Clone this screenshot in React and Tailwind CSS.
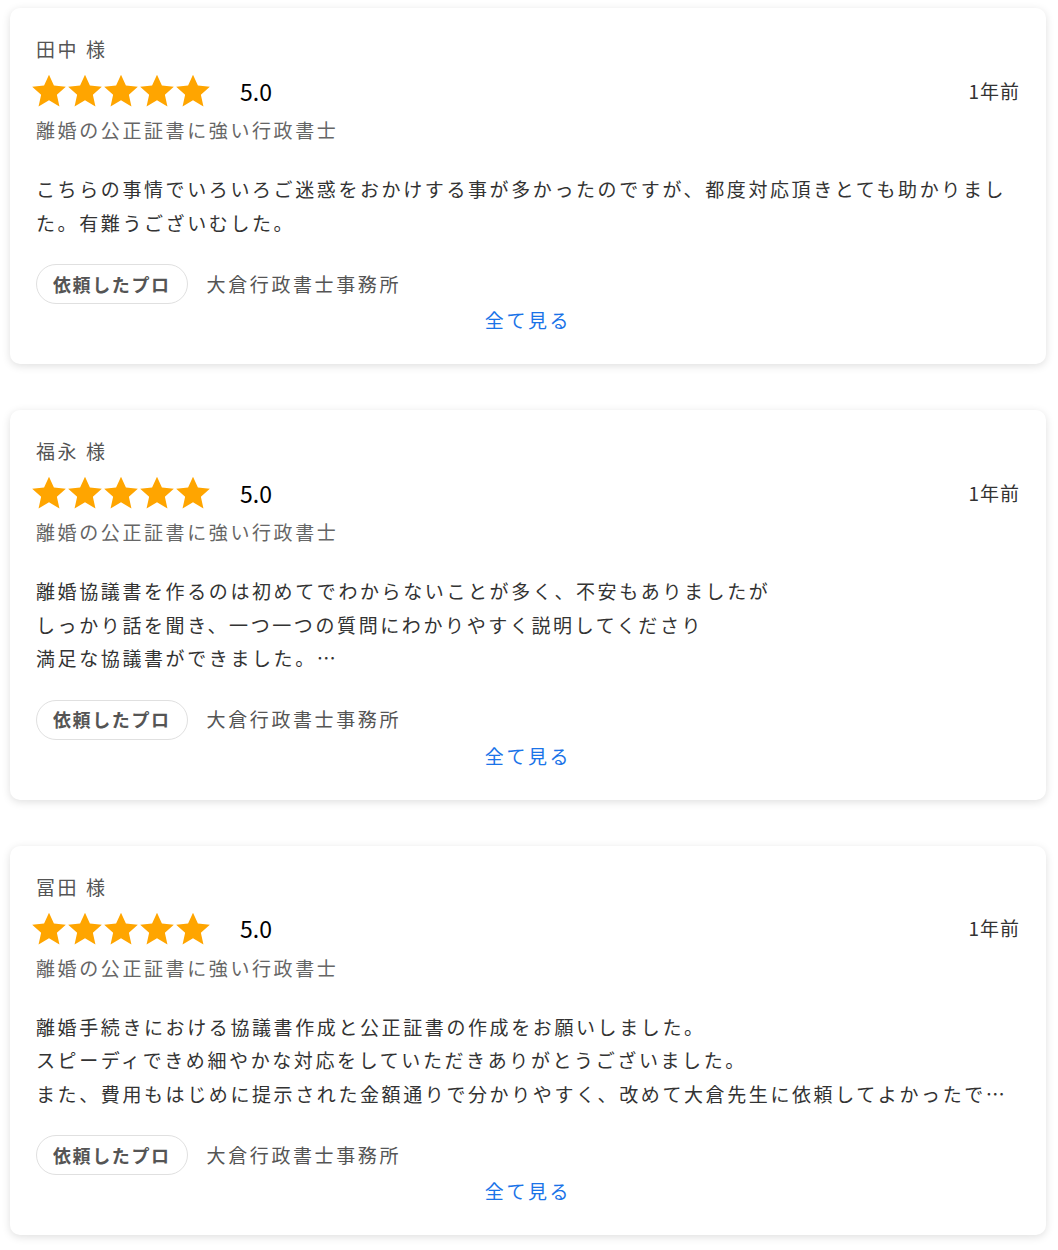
const REVIEWS = [
  {
    id: 1,
    name: '田中 様',
    body: 'こちらの事情でいろいろご迷惑をおかけする事が多かったのですが、都度対応頂きとても助かりました。有難うございむした。',
  },
  {
    id: 2,
    name: '福永 様',
    body: '離婚協議書を作るのは初めてでわからないことが多く、不安もありましたが\nしっかり話を聞き、一つ一つの質問にわかりやすく説明してくださり\n満足な協議書ができました。\n本当にありがとうございました。',
  },
  {
    id: 3,
    name: '冨田 様',
    body: '離婚手続きにおける協議書作成と公正証書の作成をお願いしました。\nスピーディできめ細やかな対応をしていただきありがとうございました。\nまた、費用もはじめに提示された金額通りで分かりやすく、改めて大倉先生に依頼してよかったです。ありがとうございました。',
  },
];

const Star = () => (
  <svg viewBox="0 0 24 24" className="w-[40px] h-[40px] -mx-[2px] shrink-0" fill="#ffa500">
    <path d="M12 2.2l2.95 6.55 7.15.72-5.38 4.78 1.55 7.03L12 17.62l-6.27 3.66 1.55-7.03L1.9 9.47l7.15-.72z" />
  </svg>
);

const ReviewCard = ({ review }) => (
  <div className="bg-white rounded-[10px] shadow-[0_2px_9px_rgba(0,0,0,0.13)] px-[26px] pt-[27px] pb-[30px] tracking-[2.6px]">
    <p className="text-[19px] leading-[28px] text-[#555]">{review.name}</p>

    <div className="flex items-center justify-between mt-[10px] h-[36px]">
      <div className="flex items-center -ml-[5px]">
        {[0, 1, 2, 3, 4].map((i) => <Star key={i} />)}
        <span className="ml-[29px] text-[23px] tracking-normal text-black">5.0</span>
      </div>
      <span className="text-[19px] tracking-[1px] text-[#333]">1年前</span>
    </div>

    <p className="mt-[7px] text-[19px] leading-[28px] text-[#666]">離婚の公正証書に強い行政書士</p>

    <p className="mt-[28px] text-[19px] leading-[33.5px] text-[#333] whitespace-pre-line line-clamp-3">
      {review.body}
    </p>

    <div className="flex items-center mt-[25px]">
      <span className="h-[40px] px-[16px] flex items-center rounded-full border border-[#e0e0e0] text-[18px] font-bold tracking-[1.6px] text-[#555]">
        依頼したプロ
      </span>
      <span className="ml-[19px] text-[19px] text-[#555]">大倉行政書士事務所</span>
    </div>

    <p className="mt-[2px] text-center text-[19px] leading-[28px] text-[#1a73e8]">全て見る</p>
  </div>
);

export default function App() {
  return (
    <div
      className="bg-white min-h-[1250px] pt-[8px] pl-[10px]"
      style={{ fontFamily: '"Noto Sans CJK JP", "Noto Sans", sans-serif' }}
    >
      <div className="w-[1036px] flex flex-col gap-[46px]">
        {REVIEWS.map((r) => <ReviewCard key={r.id} review={r} />)}
      </div>
    </div>
  );
}
